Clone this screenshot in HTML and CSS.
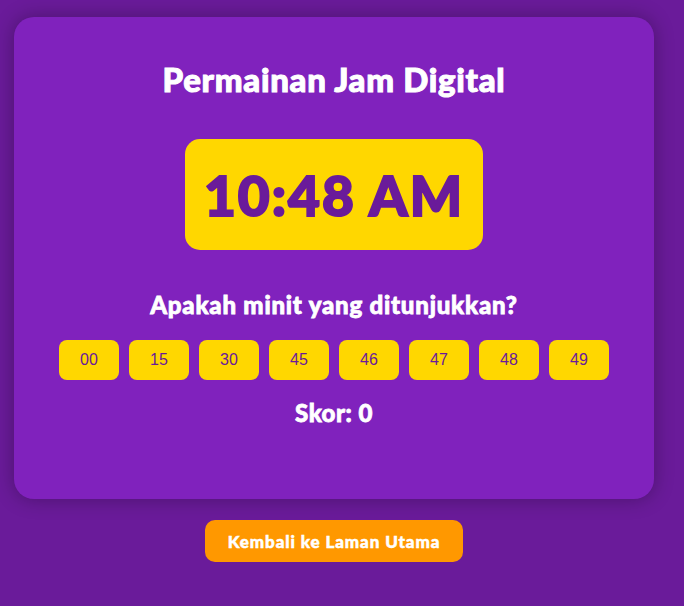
FILE: index.html
```html
<!DOCTYPE html>
<html lang="id">
<head>
<meta charset="utf-8">
<title>Permainan Jam Digital</title>
<link rel="stylesheet" href="styles.css">
</head>
<body>
<div class="page">
  <div class="card">
    <h1 class="title">Permainan Jam Digital</h1>
    <div class="clock">10:48 AM</div>
    <h2 class="question">Apakah minit yang ditunjukkan?</h2>
    <div class="options">
      <button class="opt">00</button>
      <button class="opt">15</button>
      <button class="opt">30</button>
      <button class="opt">45</button>
      <button class="opt">46</button>
      <button class="opt">47</button>
      <button class="opt">48</button>
      <button class="opt">49</button>
    </div>
    <div class="score">Skor: 0</div>
  </div>
  <button class="back">Kembali ke Laman Utama</button>
</div>
</body>
</html>
```
FILE: styles.css
```css
html, body {
  margin: 0;
  padding: 0;
}
body {
  background: #6a1b9a;
  font-family: "Lato", "Open Sans", sans-serif;
  color: #fff;
  height: 606px;
}
.page {
  width: 668px;
  padding-top: 17px;
  display: flex;
  flex-direction: column;
  align-items: center;
}
.card {
  width: 640px;
  height: 482px;
  box-sizing: border-box;
  background: #8022bd;
  border-radius: 20px;
  box-shadow: 0 0 20px rgba(0, 0, 0, 0.3);
  display: flex;
  flex-direction: column;
  align-items: center;
  padding-top: 40px;
}
.title {
  margin: 0;
  font-size: 33px;
  font-weight: 900;
  line-height: 44px;
  letter-spacing: 0.7px;
  -webkit-text-stroke: 1px #fff;
}
.clock {
  margin-top: 38px;
  width: 298px;
  height: 111px;
  box-sizing: border-box;
  background: #ffd700;
  color: #6a1b9a;
  border-radius: 15px;
  display: flex;
  align-items: center;
  justify-content: center;
  font-size: 55px;
  font-weight: 900;
  letter-spacing: 2px;
  -webkit-text-stroke: 2px #6a1b9a;
}
.question {
  margin: 38px 0 0;
  font-size: 24px;
  font-weight: 900;
  line-height: 34px;
  letter-spacing: 0.8px;
  -webkit-text-stroke: 0.8px #fff;
}
.options {
  margin-top: 18px;
  display: flex;
  gap: 10px;
}
.opt {
  width: 60px;
  height: 40px;
  border: none;
  border-radius: 8px;
  background: #ffd700;
  color: #6a1b9a;
  font-family: "Liberation Sans", Arial, sans-serif;
  font-size: 16px;
  padding: 0;
}
.score {
  margin-top: 18px;
  font-size: 24px;
  font-weight: 900;
  line-height: 30px;
  letter-spacing: 0.5px;
  -webkit-text-stroke: 0.8px #fff;
}
.back {
  margin-top: 21px;
  width: 258px;
  height: 42px;
  border: none;
  border-radius: 10px;
  background: #ff9800;
  color: #fff;
  font-family: "Lato", "Open Sans", sans-serif;
  font-size: 17px;
  font-weight: 900;
  letter-spacing: 0.9px;
  -webkit-text-stroke: 0.5px #fff;
  padding: 0;
}
```
